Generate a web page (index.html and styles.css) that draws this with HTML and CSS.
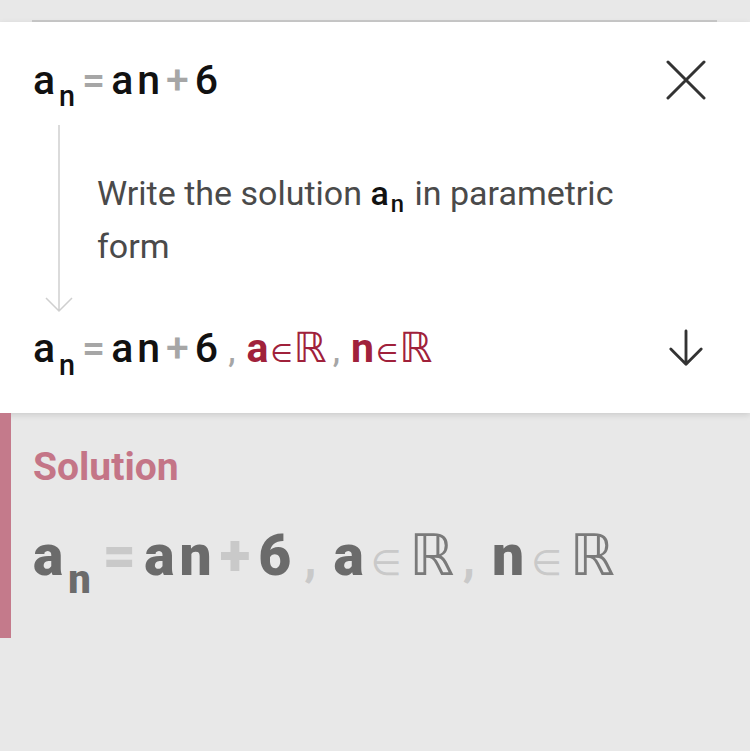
FILE: index.html
```html
<!DOCTYPE html>
<html lang="en">
<head>
    <meta charset="UTF-8">
    <meta name="viewport" content="width=device-width, initial-scale=1.0">
    <title>Solution steps</title>
    <link rel="stylesheet" href="styles.css">
</head>
<body>
    <div class="top-strip"></div>

    <div class="card">
        <div class="eq-row first">
            <div class="math">
                <span>a</span><sub>n</sub><span class="op">=</span><span>a</span><span>n</span><span class="op">+</span><span>6</span>
            </div>
            <svg class="icon close" viewBox="0 0 40 40">
                <path d="M2 2 L38 38 M38 2 L2 38"></path>
            </svg>
        </div>

        <div class="step">
            <svg class="step-arrow" viewBox="0 0 28 188">
                <path d="M14 0 V186 M1 173 L14 186 L27 173"></path>
            </svg>
            <p class="step-text">Write the solution <span class="inline-math">a<sub>n</sub></span> in parametric<br>form</p>
        </div>

        <div class="eq-row result">
            <div class="math">
                <span>a</span><sub>n</sub><span class="op">=</span><span>a</span><span>n</span><span class="op">+</span><span>6</span><span class="comma">,</span><span class="var">a</span><span class="set">∈</span><span class="real">ℝ</span><span class="comma">,</span><span class="var">n</span><span class="set">∈</span><span class="real">ℝ</span>
            </div>
            <svg class="icon down" viewBox="0 0 40 40">
                <path d="M20 2 V37 M4 21 L20 37 L36 21"></path>
            </svg>
        </div>
    </div>

    <div class="solution">
        <h2>Solution</h2>
        <div class="math big">
            <span>a</span><sub>n</sub><span class="op">=</span><span>a</span><span>n</span><span class="op">+</span><span>6</span><span class="comma">,</span><span>a</span><span class="set">∈</span><span class="real">ℝ</span><span class="comma">,</span><span>n</span><span class="set">∈</span><span class="real">ℝ</span>
        </div>
    </div>
</body>
</html>
```

FILE: styles.css
```css
body {
    margin: 0;
    background-color: #e8e8e8;
    font-family: Roboto, "Noto Sans", sans-serif;
    color: #111;
    overflow: hidden;
}
.top-strip {
    height: 20px;
    margin: 0 33px 0 32px;
    border-bottom: 2px solid #c9c9c9;
}

/* white step card */
.card {
    background-color: #fff;
    padding: 33px 33px 30px;
    box-shadow: 0 2px 6px rgba(0, 0, 0, 0.12);
}
.eq-row {
    display: flex;
    align-items: center;
    justify-content: space-between;
}
.eq-row.first {
    height: 50px;
}
.eq-row.result {
    height: 70px;
}
.math {
    font-size: 41px;
    font-weight: 500;
    letter-spacing: 4px;
    white-space: nowrap;
    line-height: 1;
}
.math sub {
    font-size: 0.7em;
    vertical-align: -0.45em;
    line-height: 0;
    margin-right: 1px;
}
.math .op {
    color: #a6a6a6;
    font-weight: 500;
    margin: 0 2px;
}
.math .comma {
    color: #a6a6a6;
    font-size: 0.8em;
    margin: 0 7px 0 6px;
}
.math .var {
    color: #a0213b;
    font-weight: 700;
    letter-spacing: 2px;
}
.math .set {
    color: #a0213b;
    font-family: "DejaVu Sans", sans-serif;
    font-weight: 400;
    font-size: 0.62em;
    letter-spacing: 0;
    margin-right: 1px;
}
.math .real {
    color: #a0213b;
    font-family: "DejaVu Sans", sans-serif;
    font-weight: 400;
    font-size: 1.02em;
    letter-spacing: 0;
}
.icon {
    fill: none;
    stroke: #333;
    stroke-width: 3;
    stroke-linecap: round;
    stroke-linejoin: round;
}
.close {
    width: 40px;
    height: 40px;
    margin-right: 11px;
}
.down {
    width: 38px;
    height: 38px;
    margin-right: 12px;
}

.step {
    display: flex;
    align-items: flex-start;
    gap: 24px;
    margin-top: 20px;
}
.step-arrow {
    width: 28px;
    height: 188px;
    flex: none;
    margin-left: 12px;
    fill: none;
    stroke: #cfcfcf;
    stroke-width: 1.5;
}
.step-text {
    margin: 42px 0 0;
    font-size: 34px;
    line-height: 53px;
    color: #4a4a4a;
}
.inline-math {
    display: inline-block;
    line-height: 34px;
    color: #111;
    font-weight: 500;
    margin-right: 2px;
}
.inline-math sub {
    font-size: 0.7em;
    vertical-align: -0.3em;
    line-height: 1;
    margin-left: 2px;
}

/* dimmed solution block */
.solution {
    border-left: 11px solid #c47a8b;
    height: 225px;
    box-sizing: border-box;
    padding: 30px 0 0 22px;
}
.solution h2 {
    margin: 0;
    font-size: 39px;
    line-height: 48px;
    font-weight: 700;
    color: #c47587;
}
.math.big {
    margin-top: 36px;
    font-size: 57px;
    font-weight: 900;
    color: #6b6b6b;
    letter-spacing: 5px;
}
.math.big sub {
    margin-right: 4px;
}
.math.big .op {
    color: #c9c9c9;
    font-weight: 900;
    margin: 0 3px;
}
.math.big .comma {
    color: #c9c9c9;
    margin: 0 12px 0 8px;
}
.math.big .set {
    color: #c9c9c9;
    font-size: 0.62em;
    margin: 0 8px 0 2px;
}
.math.big .real {
    color: #7a7a7a;
    font-size: 1em;
}
```
